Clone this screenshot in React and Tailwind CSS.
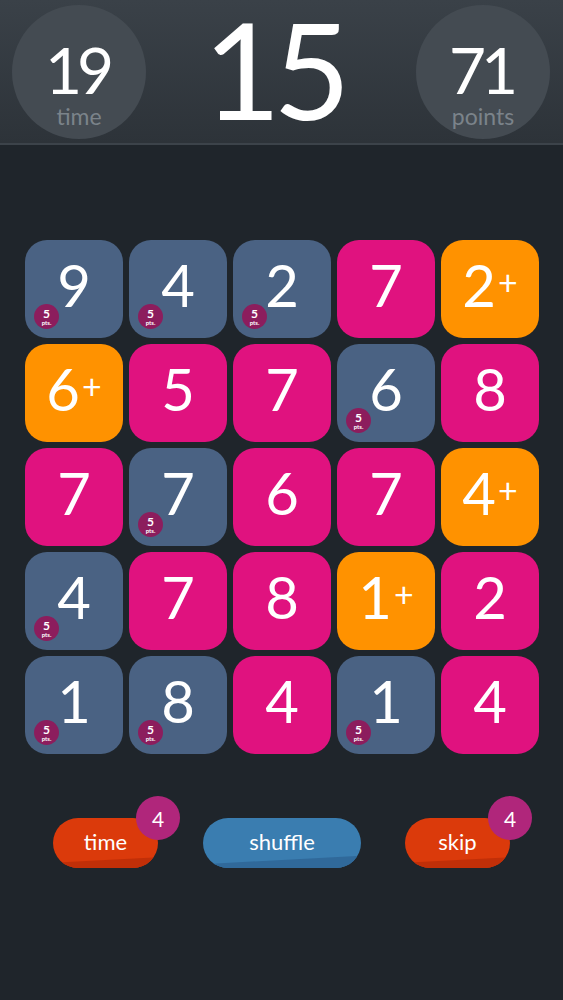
import React from "react";

const FONT = { fontFamily: "Lato, 'Noto Sans', sans-serif" };

// b = blue (with 5 pts badge), m = magenta, o = orange (bonus)
const board = [
  [["9", "b"], ["4", "b"], ["2", "b"], ["7", "m"], ["2", "o"]],
  [["6", "o"], ["5", "m"], ["7", "m"], ["6", "b"], ["8", "m"]],
  [["7", "m"], ["7", "b"], ["6", "m"], ["7", "m"], ["4", "o"]],
  [["4", "b"], ["7", "m"], ["8", "m"], ["1", "o"], ["2", "m"]],
  [["1", "b"], ["8", "b"], ["4", "m"], ["1", "b"], ["4", "m"]],
];

const tileColor = {
  b: "bg-[#4a6283]",
  m: "bg-[#e0127f]",
  o: "bg-[#ff9200]",
};

function StatCircle({ value, label }) {
  return (
    <div className="w-[134px] h-[134px] rounded-full bg-[#444b52] flex flex-col items-center pt-[36px]">
      <div className="text-white text-[64px] leading-[0.9] tracking-[-0.08em] pr-[4px]">{value}</div>
      <div className="text-[#7b838a] text-[23px] leading-none mt-[7px]">{label}</div>
    </div>
  );
}

function Tile({ n, kind }) {
  return (
    <div className={`relative w-[98px] h-[98px] rounded-[22px] ${tileColor[kind]} flex items-center justify-center`}>
      <div className="flex items-center -mt-[8px]">
        <span className="text-white text-[58px] leading-none">{n}</span>
        {kind === "o" && <span className="text-white text-[34px] leading-none ml-[2px] -mt-[6px]">+</span>}
      </div>
      {kind === "b" && (
        <div className="absolute left-[9px] bottom-[9px] w-[25px] h-[25px] rounded-full bg-[#8c1d5d] flex flex-col items-center justify-center text-white">
          <span className="text-[12px] leading-none font-bold">5</span>
          <span className="text-[6px] leading-none font-bold">pts.</span>
        </div>
      )}
    </div>
  );
}

function PowerButton({ label, color, shade, width, badge }) {
  return (
    <div className="relative">
      <div className={`relative overflow-hidden h-[50px] rounded-full ${color} flex items-center justify-center`} style={{ width }}>
        <div className={`absolute left-[-10px] right-[-10px] bottom-[-14px] h-[22px] ${shade} -rotate-3`} />
        <span className="relative text-white text-[22px] leading-none -mt-[2px]">{label}</span>
      </div>
      {badge && (
        <div className="absolute right-[-22px] top-[-22px] w-[44px] h-[44px] rounded-full bg-[#b0267b] flex items-center justify-center text-white text-[21px] leading-none">
          {badge}
        </div>
      )}
    </div>
  );
}

export default function App() {
  return (
    <div className="w-[563px] h-[1000px] bg-[#1f252b] overflow-hidden" style={FONT}>
      <div className="h-[145px] bg-gradient-to-b from-[#3a4148] to-[#2d3339] border-b-2 border-[#3c434a] flex items-center justify-between pl-[12px] pr-[13px]">
        <StatCircle value="19" label="time" />
        <div className="flex text-white text-[134px] leading-none -mt-[6px] pr-[8px]">
          <span>1</span>
          <span className="-ml-[8px]">5</span>
        </div>
        <StatCircle value="71" label="points" />
      </div>

      <div className="w-[514px] ml-[25px] mt-[95px] flex flex-col gap-[6px]">
        {board.map((row, r) => (
          <div key={r} className="flex gap-[6px]">
            {row.map(([n, k], c) => (
              <Tile key={c} n={n} kind={k} />
            ))}
          </div>
        ))}
      </div>

      <div className="flex items-center mt-[64px] pl-[53px]">
        <PowerButton label="time" color="bg-[#db3a0b]" shade="bg-[#c12f08]" width={105} badge="4" />
        <div className="ml-[45px]">
          <PowerButton label="shuffle" color="bg-[#3a7db0]" shade="bg-[#30699a]" width={158} />
        </div>
        <div className="ml-[44px]">
          <PowerButton label="skip" color="bg-[#db3a0b]" shade="bg-[#c12f08]" width={105} badge="4" />
        </div>
      </div>
    </div>
  );
}
